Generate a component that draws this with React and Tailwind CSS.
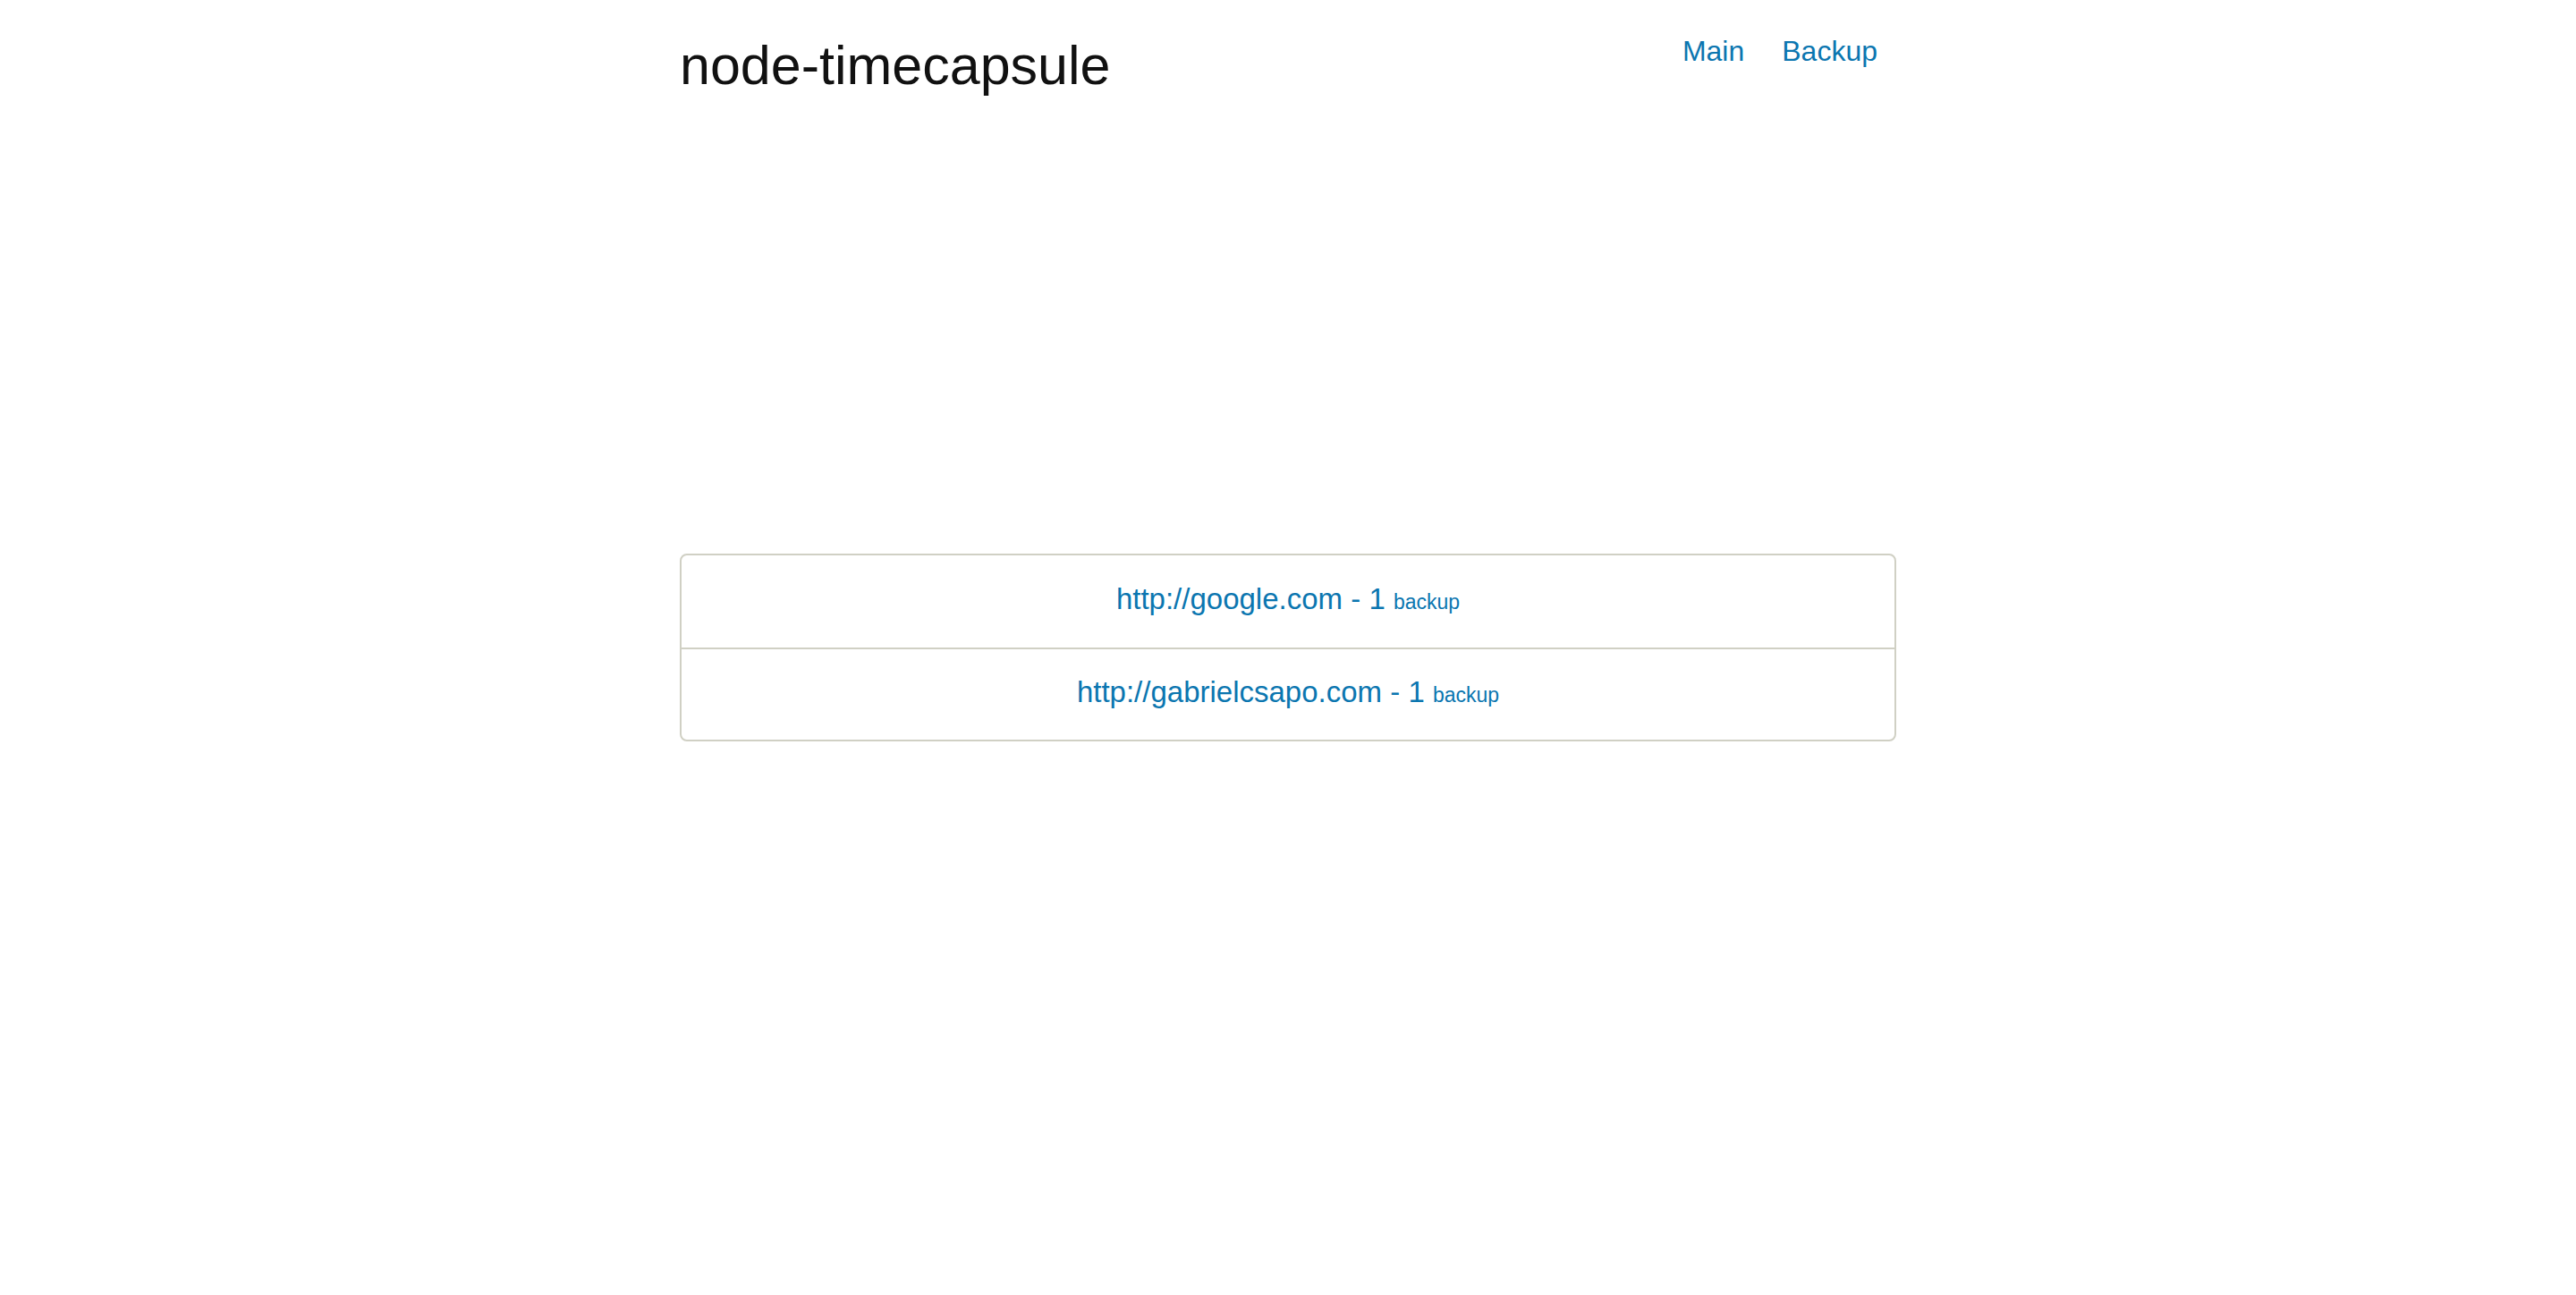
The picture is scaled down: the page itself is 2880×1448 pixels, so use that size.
export default function App() {
    const sites = [
        { url: 'http://google.com', count: 1 },
        { url: 'http://gabrielcsapo.com', count: 1 },
    ];

    return (
        <div className="min-h-screen bg-white font-['Liberation_Sans',Arial,sans-serif]">
            <div className="mx-auto w-[1360px]">
                <header className="flex items-start justify-between">
                    <h1 className="pt-[43px] text-[61px] leading-none font-normal text-[#111]">node-timecapsule</h1>
                    <nav className="flex gap-[42px] pt-[41px] pr-[21px] text-[32px] leading-none text-[#0b76b0]">
                        <a href="#">Main</a>
                        <a href="#">Backup</a>
                    </nav>
                </header>
                <ul className="mt-[515px] rounded-[8px] border-2 border-[#d0d0c4]">
                    {sites.map((site, i) => (
                        <li
                            key={site.url}
                            className={`flex h-[103px] items-center justify-center pb-[6px] ${i > 0 ? 'border-t-2 border-[#d0d0c4]' : ''}`}
                        >
                            <a href="#" className="text-[33px] leading-none text-[#0b76b0]">
                                {site.url} - {site.count} <small className="text-[23px]">backup</small>
                            </a>
                        </li>
                    ))}
                </ul>
            </div>
        </div>
    );
}
